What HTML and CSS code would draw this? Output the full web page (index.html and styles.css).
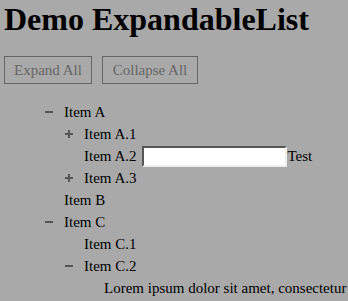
FILE: index.html
```html
<!DOCTYPE html>
<html>
<head>
<meta charset="utf-8">
<link rel="stylesheet" href="styles.css">
</head>
<body>
<h1 class="title">Demo ExpandableList</h1>
<div class="toolbar">
  <button class="btn btn-expand">Expand All</button>
  <button class="btn btn-collapse">Collapse All</button>
</div>
<ul class="tree">
  <li class="node">
    <div class="row"><span class="tog minus"></span><span class="label">Item A</span></div>
    <ul class="tree sub">
      <li class="node"><div class="row"><span class="tog plus"></span><span class="label">Item A.1</span></div></li>
      <li class="node"><div class="row"><span class="tog"></span><span class="label">Item A.2</span><input class="field" type="text"><span class="label">Test</span></div></li>
      <li class="node"><div class="row"><span class="tog plus"></span><span class="label">Item A.3</span></div></li>
    </ul>
  </li>
  <li class="node"><div class="row"><span class="tog"></span><span class="label">Item B</span></div></li>
  <li class="node">
    <div class="row"><span class="tog minus"></span><span class="label">Item C</span></div>
    <ul class="tree sub">
      <li class="node"><div class="row"><span class="tog"></span><span class="label">Item C.1</span></div></li>
      <li class="node">
        <div class="row"><span class="tog minus"></span><span class="label">Item C.2</span></div>
        <ul class="tree sub">
          <li class="node"><div class="row"><span class="tog"></span><span class="label">Lorem ipsum dolor sit amet, consectetur</span></div></li>
        </ul>
      </li>
    </ul>
  </li>
</ul>
</body>
</html>
```
FILE: styles.css
```css
html, body {
  background: #a9a9a9;
}
body {
  margin: 0;
  padding: 0 4px;
  font-family: "Liberation Serif", "Times New Roman", serif;
  color: #000;
  overflow: hidden;
}
.title {
  font-size: 32px;
  font-weight: bold;
  margin: 1px 0 0 0;
  line-height: 37px;
}
.toolbar {
  display: flex;
  gap: 10px;
  margin-top: 18px;
}
.btn {
  font-family: "Liberation Serif", "Times New Roman", serif;
  font-size: 15px;
  color: #666;
  background: #a9a9a9;
  border: 1px solid #666;
  height: 28px;
  padding: 0;
}
.btn-expand {
  width: 88px;
}
.btn-collapse {
  width: 96px;
}
.tree {
  list-style: none;
  margin: 0;
  padding: 0;
}
.tree:not(.sub) {
  margin-top: 17px;
  padding-left: 37px;
}
.sub {
  padding-left: 20px;
}
.row {
  display: flex;
  align-items: center;
  height: 22px;
  font-size: 15px;
  white-space: nowrap;
}
.tog {
  width: 23px;
  height: 22px;
  flex: none;
  position: relative;
}
.minus::before,
.plus::before,
.plus::after {
  content: "";
  position: absolute;
  background: #555;
}
.minus::before,
.plus::before {
  left: 4px;
  top: 10px;
  width: 8px;
  height: 2px;
}
.plus::after {
  left: 7px;
  top: 7px;
  width: 2px;
  height: 8px;
}
.field {
  width: 141px;
  height: 17px;
  margin: 0 1px 0 5px;
  padding: 0;
  border-style: solid;
  border-width: 2px;
  border-top-color: #555;
  border-left-color: #555;
  border-right-color: #eee;
  border-bottom-color: #eee;
  background: #fff;
}
```
